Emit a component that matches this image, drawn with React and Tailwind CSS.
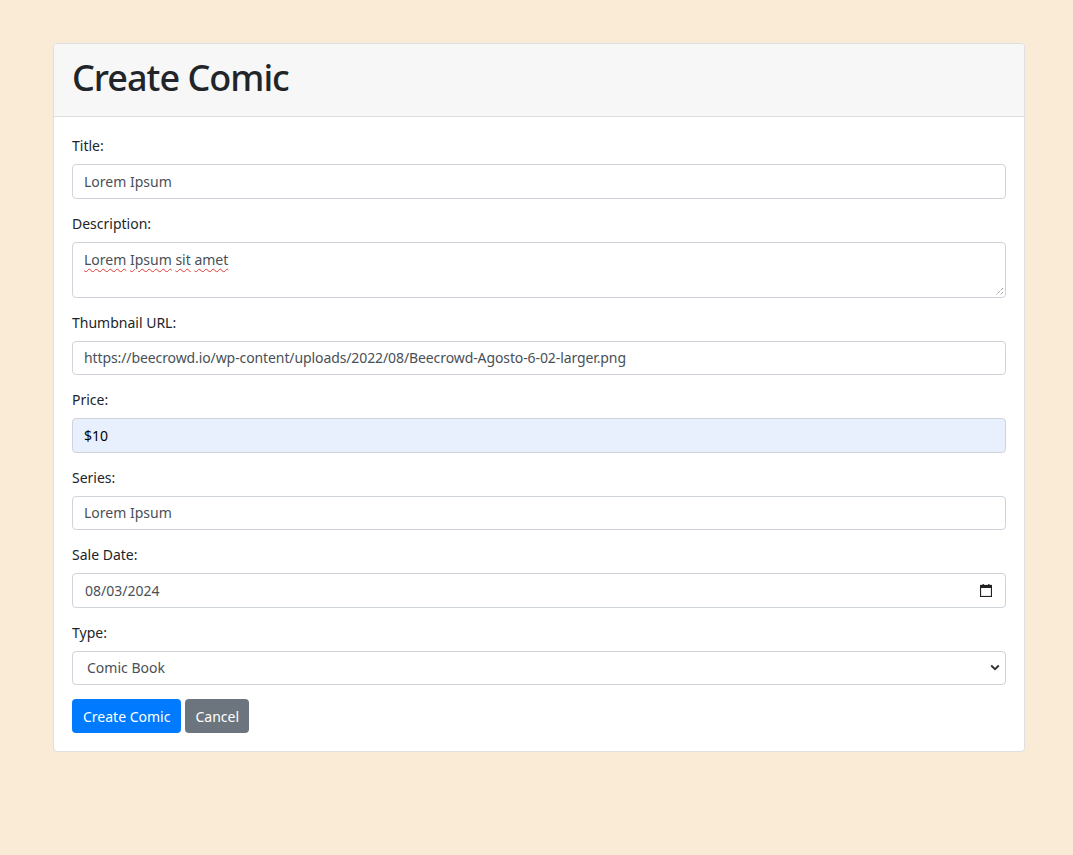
import React from "react";

const font = { fontFamily: '"Noto Sans", "Open Sans", sans-serif' };

function Field({ label, children }) {
  return (
    <div className="mb-[14px]">
      <div className="text-[14px] leading-[21px] mb-[8px] text-[#212529]">{label}</div>
      {children}
    </div>
  );
}

function Box({ children, className = "" }) {
  return (
    <div
      className={
        "h-[34.5px] border border-[#ced4da] rounded-[4px] flex items-center text-[14px] text-[#495057] " +
        className
      }
    >
      {children}
    </div>
  );
}

function Squig({ children }) {
  return (
    <span className="underline decoration-wavy decoration-[#e53935] decoration-1 underline-offset-[3px]">
      {children}
    </span>
  );
}

export default function App() {
  return (
    <div className="min-h-[855px] w-full bg-[#faebd7] pt-[43px]" style={font}>
      <div className="ml-[53px] w-[972px] bg-white border border-[#dfdfdf] rounded-[4px] overflow-hidden">
        <div className="h-[73px] bg-[#f7f7f7] border-b border-[#dfdfdf] px-[18px] flex items-center">
          <h1 className="text-[36px] font-medium leading-none tracking-[-1px] text-[#212529] mt-[-4px]">Create Comic</h1>
        </div>
        <div className="px-[18px] pt-[18px] pb-[18px]">
          <Field label="Title:">
            <Box className="pl-[11px]">Lorem Ipsum</Box>
          </Field>
          <Field label="Description:">
            <div className="relative h-[56px] border border-[#ced4da] rounded-[4px] pl-[11px] pt-[6px] text-[14px] leading-[21px] text-[#495057]">
              <Squig>Lorem</Squig> <Squig>Ipsum</Squig> <Squig>sit</Squig> <Squig>amet</Squig>
              <svg className="absolute right-[1px] bottom-[1px]" width="9" height="9" viewBox="0 0 9 9">
                <line x1="8" y1="1" x2="1" y2="8" stroke="#777" strokeWidth="1" strokeDasharray="1 1" />
                <line x1="8" y1="5" x2="5" y2="8" stroke="#777" strokeWidth="1" strokeDasharray="1 1" />
              </svg>
            </div>
          </Field>
          <Field label="Thumbnail URL:">
            <Box className="pl-[11px] tracking-[-0.1px]">https://beecrowd.io/wp-content/uploads/2022/08/Beecrowd-Agosto-6-02-larger.png</Box>
          </Field>
          <Field label="Price:">
            <Box className="pl-[11px] bg-[#e8f0fe] !text-black">$10</Box>
          </Field>
          <Field label="Series:">
            <Box className="pl-[11px]">Lorem Ipsum</Box>
          </Field>
          <Field label="Sale Date:">
            <Box className="pl-[12px] pr-[13px] justify-between">
              <span>08/03/2024</span>
              <svg width="12" height="13" viewBox="0 0 12 13">
                <rect x="0.5" y="1.5" width="11" height="11" fill="none" stroke="#222" strokeWidth="1.2" />
                <rect x="0.5" y="1.5" width="11" height="2.5" fill="#222" />
                <rect x="2.5" y="0" width="1.3" height="2" fill="#222" />
                <rect x="8.2" y="0" width="1.3" height="2" fill="#222" />
              </svg>
            </Box>
          </Field>
          <Field label="Type:">
            <Box className="pl-[14px] pr-[4px] justify-between">
              <span>Comic Book</span>
              <svg width="10" height="7" viewBox="0 0 10 7" className="mr-[1px]">
                <path d="M1.2 1.5 L5 5.2 L8.8 1.5" fill="none" stroke="#333" strokeWidth="1.9" />
              </svg>
            </Box>
          </Field>
          <div className="flex gap-[4px]">
            <div className="h-[34px] px-[11px] bg-[#007bff] text-white text-[14px] rounded-[4px] flex items-center">
              Create Comic
            </div>
            <div className="h-[34px] px-[10px] bg-[#6c757d] text-white text-[14px] rounded-[4px] flex items-center">
              Cancel
            </div>
          </div>
        </div>
      </div>
    </div>
  );
}
